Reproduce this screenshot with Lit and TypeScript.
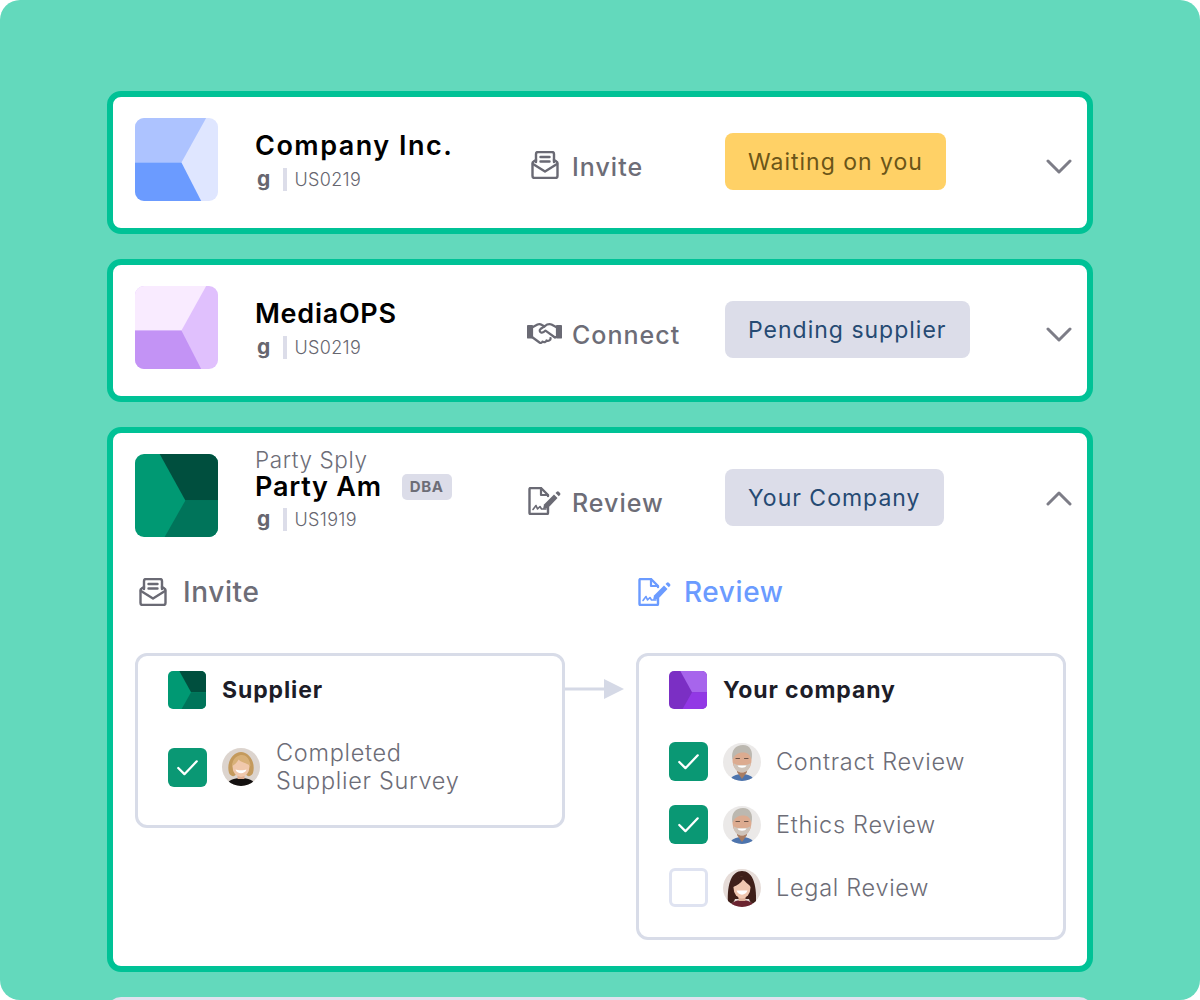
import { LitElement, html, svg, css } from 'lit';
import { customElement } from 'lit/decorators.js';
import { styleMap } from 'lit/directives/style-map.js';

type Tone = 'amber' | 'slate';

interface Company {
  logo: string[];
  name: string;
  track: number;
  alias?: string;
  dba?: boolean;
  code: string;
  step: 'invite' | 'connect' | 'review';
  stepLabel: string;
  status: string;
  tone: Tone;
  open?: boolean;
}

const companies: Company[] = [
  { logo: ['#adc3ff', '#dfe6ff', '#6b9bff'], name: 'Company Inc.', track: 1.5, code: 'US0219', step: 'invite', stepLabel: 'Invite', status: 'Waiting on you', tone: 'amber' },
  { logo: ['#f9ebff', '#e0c0fd', '#c393f5'], name: 'MediaOPS', track: 0.72, code: 'US0219', step: 'connect', stepLabel: 'Connect', status: 'Pending supplier', tone: 'slate' },
  { logo: ['#004f3e', '#009973', '#00745a'], name: 'Party Am', track: 0.76, alias: 'Party Sply', dba: true, code: 'US1919', step: 'review', stepLabel: 'Review', status: 'Your Company', tone: 'slate', open: true },
];

// light logos have the wedge on the right, dark ones on the left
const lightLogo = (c: string[]) => svg`
  <rect width="84" height="84" fill=${c[1]} />
  <path d="M0 0H72L47 45H0Z" fill=${c[0]} />
  <path d="M0 45H47L67 84H0Z" fill=${c[2]} />`;

const darkLogo = (c: string[]) => svg`
  <rect width="84" height="84" fill=${c[1]} />
  <path d="M25 0H84V47H51Z" fill=${c[0]} />
  <path d="M51 47H84V84H30Z" fill=${c[2]} />`;

const icons = {
  invite: svg`<g fill="none" stroke="currentColor" stroke-width="2.4" stroke-linejoin="round" stroke-linecap="round">
    <path d="M5 11V3a2 2 0 0 1 2-2H21a2 2 0 0 1 2 2V11" />
    <path d="M5 9L2.6 10.6A2 2 0 0 0 1.5 12.2V25a2 2 0 0 0 2 2H24.5a2 2 0 0 0 2-2V12.2a2 2 0 0 0-1.1-1.6L23 9" />
    <path d="M2 13L14 20.5L26 13" />
    <path d="M9.5 6H18.5M9.5 10.5H18.5" />
  </g>`,
  review: svg`<g fill="none" stroke="currentColor" stroke-linejoin="round" stroke-linecap="round">
    <path stroke-width="2.4" d="M20 20V26a1 1 0 0 1-1 1H2.5a1 1 0 0 1-1-1V2a1 1 0 0 1 1-1H13L20 8V9" />
    <path stroke-width="2.2" d="M13 1.5V8H19.5" />
    <path stroke-width="1.6" d="M5 22.5L8 18.5L9.5 22L12 19.5L13.5 22H18" />
    <path fill="currentColor" stroke="none" d="M15 22L16 17.5L26 7.5L29.5 11L20 21Z" />
    <path fill="currentColor" stroke="none" d="M27.5 6L28.8 4.7A1.4 1.4 0 0 1 30.8 4.7L32 6A1.4 1.4 0 0 1 32 8L30.8 9.3Z" />
  </g>`,
  connect: svg`<g fill="none" stroke="currentColor" stroke-width="2.2" stroke-linejoin="round" stroke-linecap="round">
    <path fill="currentColor" d="M1 4H5V15.5H1Z" />
    <path fill="currentColor" d="M30 4H34V15.5H30Z" />
    <path d="M5 5.5L10.5 2.5C12 1.8 13.5 2 15 3L17.5 4.5" />
    <path d="M30 5.5L24.5 2.5C23 1.8 21.5 2 20 2.6L13.5 7C12.2 8 12.5 9.8 14 10.4C15.5 11 17 10.2 18.5 8.6L28 15.5" />
    <path d="M5 15L12.5 20.5C13.8 21.3 15.2 20.8 15.5 19.5C17 20.8 19 20.2 19.5 18.5C21.5 19.5 24 18 23.5 16" />
    <path d="M30 15H27.5" />
  </g>`,
};
const iconBox: Record<string, string> = { invite: '0 0 28 28', review: '0 0 34 28', connect: '0 0 35 22' };

const check = html`<svg class="tick" viewBox="0 0 38 38"><path d="M10 19.5L16 25.5L28 13" fill="none" stroke="#fff" stroke-width="2.2" stroke-linecap="round" stroke-linejoin="round" /></svg>`;

const womanBlonde = html`<svg class="avatar" viewBox="0 0 38 38">
  <rect width="38" height="38" fill="#dcd4ce" />
  <path d="M4 38C6 32 12 30 19 30S32 32 34 38Z" fill="#141110" />
  <path d="M7 25C4 14 11 4 19 4S34 14 31 25C29 29 25 29 24 26H14C13 29 9 29 7 25Z" fill="#c49a5c" />
  <path d="M15.5 26H22.5V31H15.5Z" fill="#e0ae90" />
  <ellipse cx="19" cy="18.5" rx="8.5" ry="10.5" fill="#f0c8ac" />
  <path d="M10 18C10.5 10 16 7 20 7S28 11 28.5 18C25 15 19 14.5 16.5 11.5C15.5 14 13 16.5 10 18Z" fill="#d8b078" />
  <path d="M13.5 21.5C15.5 22.5 22.5 22.5 24.5 21.5C23 26.5 15 26.5 13.5 21.5Z" fill="#fff" />
</svg>`;

const manGrey = html`<svg class="avatar" viewBox="0 0 38 38">
  <rect width="38" height="38" fill="#ebe9e8" />
  <path d="M7 38C8 33 13 31 19 31S30 33 31 38Z" fill="#4d74ad" />
  <path d="M14 29L19 36L24 29L23 24H15Z" fill="#a87c62" />
  <ellipse cx="19" cy="17" rx="9.5" ry="12.5" fill="#dcab90" />
  <path d="M9.5 17C7.5 7 13 2 20 2S30.5 8 28.5 17C27.5 12 25 9.5 20 9.5S11 12 9.5 17Z" fill="#bcb8b0" />
  <path d="M10.5 20C11 27 15 29.5 19 29.5S27 27 27.5 20C25 23 13 23 10.5 20Z" fill="#cfc4ba" />
  <path d="M14.5 22.5H23.5C22.5 25.5 15.5 25.5 14.5 22.5Z" fill="#fff" />
  <path d="M13 15.5H16.5M21.5 15.5H25" stroke="#6c5448" stroke-width="1.2" stroke-linecap="round" />
</svg>`;

const womanDark = html`<svg class="avatar" viewBox="0 0 38 38">
  <rect width="38" height="38" fill="#e6dcd8" />
  <path d="M5 34C4 14 9 2 19 2S34 14 33 34C29 36 27 33 26 30H12C11 33 9 36 5 34Z" fill="#3f1f19" />
  <path d="M7 38C8 33 13 31 19 31S30 33 31 38Z" fill="#6b2430" />
  <path d="M15.5 26H22.5V32H15.5Z" fill="#dfb29a" />
  <ellipse cx="19" cy="18.5" rx="8.5" ry="11" fill="#f0c7b0" />
  <path d="M10 18C10.5 10 15 7 21 7C25 8 28 12 28 18C25 15 22 12.5 20 10.5C18 14 14 16.5 10 18Z" fill="#3f1f19" />
  <path d="M13.5 21.5H24.5C23 27 15 27 13.5 21.5Z" fill="#fff" />
</svg>`;

@customElement('app-root')
export class AppRoot extends LitElement {
  static styles = css`
    :host {
      display: block;
      background: #fff;
      font-family: Inter, 'Liberation Sans', sans-serif;
    }

    .page {
      box-sizing: border-box;
      height: 1000px;
      overflow: hidden;
      border-radius: 20px;
      background: #63d9bc;
      padding: 91px 107px 0;
      display: flex;
      flex-direction: column;
      gap: 25px;
    }

    .card {
      flex: none;
      background: #fff;
      border: 6px solid #00c296;
      border-radius: 14px;
      padding: 21px 15px 26px 22px;
    }

    .card.ghost {
      height: 100px;
      border-width: 4px;
      border-color: #e0e2ef;
    }

    .row {
      display: grid;
      grid-template-columns: 120px 273px 197px 1fr 26px;
      align-items: center;
      height: 84px;
    }

    .logo {
      display: block;
      width: 83px;
      height: 83px;
      border-radius: 9px;
      align-self: start;
    }

    .logo.mini {
      width: 38px;
      height: 38px;
      border-radius: 5px;
    }

    .who {
      display: flex;
      flex-direction: column;
    }

    .who.aliased {
      margin-top: -13px;
    }

    .alias {
      font-size: 22.5px;
      line-height: 22px;
      font-weight: 300;
      color: #6d6d77;
      letter-spacing: 0.6px;
    }

    .name {
      display: flex;
      align-items: center;
      gap: 20px;
      font-size: 27px;
      line-height: 32px;
      font-weight: 600;
      color: #000;
    }

    .dba {
      background: #dcdde9;
      border-radius: 5px;
      padding: 0 8px;
      font-size: 15px;
      line-height: 26px;
      font-weight: 700;
      color: #6d6d77;
      letter-spacing: 0.6px;
    }

    .meta {
      display: flex;
      align-items: center;
      margin-top: 6px;
      font-size: 18px;
      line-height: 23px;
      font-weight: 300;
      color: #66666f;
      letter-spacing: 0.3px;
    }

    .aliased .meta {
      margin-top: 5px;
    }

    .meta b {
      font-size: 21px;
      font-weight: 700;
      padding-left: 2px;
      line-height: 23px;
      margin-top: -2px;
    }

    .meta i {
      width: 4px;
      height: 23px;
      margin: 0 8px 0 12px;
      background: #dcdde9;
    }

    .step {
      display: flex;
      align-items: center;
      gap: 10px;
      font-size: 25px;
      font-weight: 550;
      color: #6d6d77;
      letter-spacing: 1px;
    }

    .row .step {
      margin-top: 13px;
    }

    .row .step svg {
      margin-top: -4px;
    }

    .step svg {
      flex: none;
      height: 28px;
      color: #6a6a74;
    }

    .step.connect svg {
      height: 22px;
      margin-left: -1px;
    }

    .row .step.invite {
      gap: 13px;
    }

    .row .step.invite svg {
      margin-left: 3px;
    }

    .step.active,
    .step.active svg {
      color: #6b9bff;
    }

    .step.big {
      font-size: 28px;
      gap: 16px;
      letter-spacing: 0.6px;
    }

    .step.big.review {
      gap: 12px;
    }

    .chip {
      justify-self: start;
      height: 57px;
      margin-top: 3px;
      padding: 0 23px;
      display: flex;
      align-items: center;
      border-radius: 8px;
      font-size: 23px;
      letter-spacing: 1px;
      font-weight: 400;
    }

    .chip.amber {
      background: #ffd166;
      color: #6b5518;
    }

    .chip.slate {
      background: #dcdde9;
      color: #264a73;
    }

    .chev {
      width: 26px;
      height: 16px;
      display: block;
      margin-top: 13px;
    }

    .chev.up {
      margin-top: 4px;
    }

    .phases {
      display: grid;
      grid-template-columns: 430px 71px 430px;
      margin-top: 37px;
    }

    .phases .step.invite {
      padding-left: 4px;
    }

    .phases .step.review {
      padding-left: 2px;
    }

    .boxes {
      display: grid;
      grid-template-columns: 430px 71px 430px;
      align-items: start;
      margin-top: 44px;
    }

    .box {
      box-sizing: border-box;
      border: 3px solid #d8dce8;
      border-radius: 12px;
      padding: 15px 20px 0 30px;
    }

    .box.left {
      height: 175px;
    }

    .box.right {
      height: 287px;
    }

    .box-head {
      display: flex;
      align-items: center;
      gap: 16px;
      height: 38px;
      font-size: 23px;
      font-weight: 650;
      color: #1d1d28;
      letter-spacing: 0.9px;
    }

    .arrow {
      display: block;
      margin-top: 24px;
      width: 71px;
      height: 24px;
    }

    .tasks {
      display: flex;
      flex-direction: column;
      gap: 24px;
      margin-top: 33px;
    }

    .left .tasks {
      margin-top: 30px;
    }

    .task {
      display: flex;
      align-items: center;
      font-size: 23.5px;
      line-height: 28px;
      font-weight: 300;
      color: #6d6d77;
      letter-spacing: 0.7px;
    }

    .box-check {
      flex: none;
      box-sizing: border-box;
      width: 39px;
      height: 39px;
      border-radius: 6px;
      margin-right: 15px;
    }

    .box-check.done {
      background: #0a9874;
    }

    .box-check.todo {
      border: 3px solid #dfe3f1;
    }

    .tick {
      display: block;
      width: 39px;
      height: 39px;
    }

    .avatar {
      flex: none;
      display: block;
      width: 38px;
      height: 38px;
      border-radius: 50%;
      margin-right: 16px;
    }

    .right .avatar {
      margin-right: 15px;
    }
  `;

  private _logo(colors: string[], dark: boolean, mini = false) {
    return html`<svg class="logo ${mini ? 'mini' : ''}" viewBox="0 0 84 84">${dark ? darkLogo(colors) : lightLogo(colors)}</svg>`;
  }

  private _step(kind: 'invite' | 'connect' | 'review', label: string, extra = '') {
    return html`<div class="step ${kind} ${extra}">
      <svg viewBox=${iconBox[kind]}>${icons[kind]}</svg>
      <span>${label}</span>
    </div>`;
  }

  private _task(done: boolean, avatar: unknown, label: unknown) {
    return html`<div class="task">
      <div class="box-check ${done ? 'done' : 'todo'}">${done ? check : ''}</div>
      ${avatar}
      <span>${label}</span>
    </div>`;
  }

  private _detail() {
    return html`
      <div class="phases">
        ${this._step('invite', 'Invite', 'big')}
        <div></div>
        ${this._step('review', 'Review', 'big active')}
      </div>
      <div class="boxes">
        <div class="box left">
          <div class="box-head">${this._logo(['#004f3e', '#009973', '#00745a'], true, true)} Supplier</div>
          <div class="tasks">
            ${this._task(true, womanBlonde, html`Completed<br />Supplier Survey`)}
          </div>
        </div>
        <svg class="arrow" viewBox="0 0 71 24">
          <path d="M0 12H42" stroke="#d5d9e6" stroke-width="3" />
          <path d="M39 2L59 12L39 22Z" fill="#d5d9e6" />
        </svg>
        <div class="box right">
          <div class="box-head">${this._logo(['#a765ec', '#7b2fc4', '#9238e5'], true, true)} Your company</div>
          <div class="tasks">
            ${this._task(true, manGrey, 'Contract Review')}
            ${this._task(true, manGrey, 'Ethics Review')}
            ${this._task(false, womanDark, 'Legal Review')}
          </div>
        </div>
      </div>
    `;
  }

  private _card(c: Company) {
    return html`<section class="card">
      <div class="row">
        ${this._logo(c.logo, !!c.open)}
        <div class="who ${c.alias ? 'aliased' : ''}">
          ${c.alias ? html`<div class="alias">${c.alias}</div>` : ''}
          <div class="name"><span style=${styleMap({ letterSpacing: `${c.track}px` })}>${c.name}</span>${c.dba ? html`<span class="dba">DBA</span>` : ''}</div>
          <div class="meta"><b>g</b><i></i><span>${c.code}</span></div>
        </div>
        ${this._step(c.step, c.stepLabel)}
        <div class="chip ${c.tone}">${c.status}</div>
        <svg class="chev ${c.open ? 'up' : ''}" viewBox="0 0 26 16">
          <path d=${c.open ? 'M2 14L13 3L24 14' : 'M2 2L13 13L24 2'} fill="none" stroke="#7d7d87" stroke-width="3" stroke-linecap="round" stroke-linejoin="round" />
        </svg>
      </div>
      ${c.open ? this._detail() : ''}
    </section>`;
  }

  render() {
    return html`<div class="page">
      ${companies.map((c) => this._card(c))}
      <section class="card ghost"></section>
    </div>`;
  }
}

declare global {
  interface HTMLElementTagNameMap {
    'app-root': AppRoot;
  }
}
